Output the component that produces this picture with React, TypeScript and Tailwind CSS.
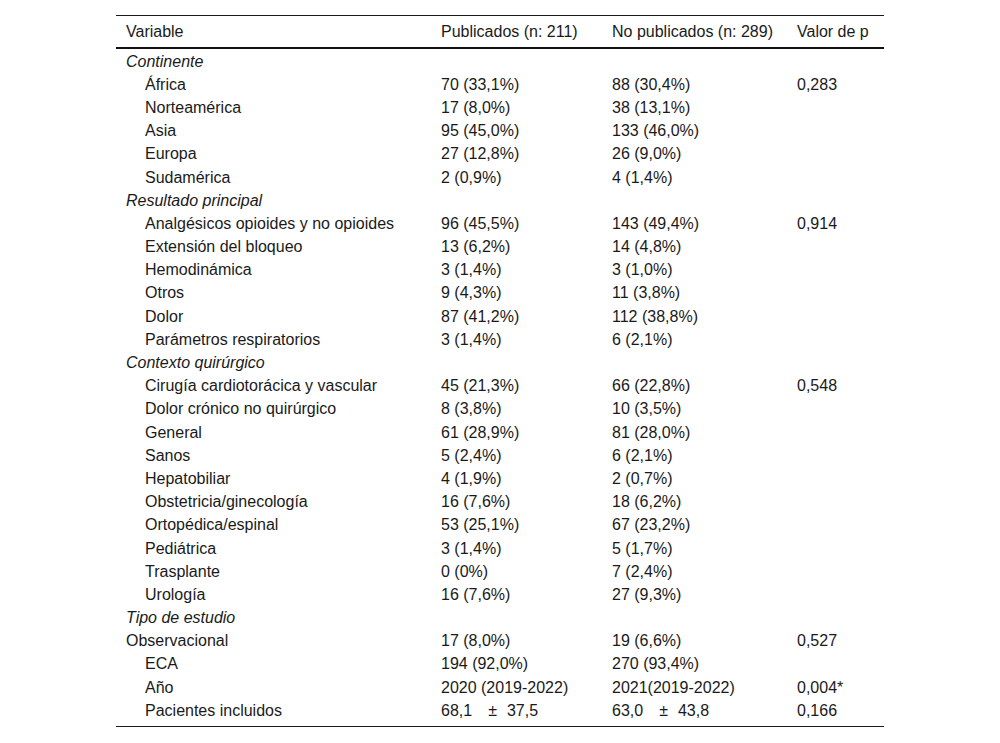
import React from "react";

type Row =
  | { kind: "section"; label: string }
  | { kind: "row"; label: string; a: React.ReactNode; b: React.ReactNode; p?: string; indent?: boolean };

const PM = ({ x, y }: { x: string; y: string }) => (
  <span className="inline-flex">
    <span>{x}</span>
    <span className="ml-[16px]">±</span>
    <span className="ml-[10px]">{y}</span>
  </span>
);

const rows: Row[] = [
  { kind: "section", label: "Continente" },
  { kind: "row", label: "África", a: "70 (33,1%)", b: "88 (30,4%)", p: "0,283", indent: true },
  { kind: "row", label: "Norteamérica", a: "17 (8,0%)", b: "38 (13,1%)", indent: true },
  { kind: "row", label: "Asia", a: "95 (45,0%)", b: "133 (46,0%)", indent: true },
  { kind: "row", label: "Europa", a: "27 (12,8%)", b: "26 (9,0%)", indent: true },
  { kind: "row", label: "Sudamérica", a: "2 (0,9%)", b: "4 (1,4%)", indent: true },
  { kind: "section", label: "Resultado principal" },
  { kind: "row", label: "Analgésicos opioides y no opioides", a: "96 (45,5%)", b: "143 (49,4%)", p: "0,914", indent: true },
  { kind: "row", label: "Extensión del bloqueo", a: "13 (6,2%)", b: "14 (4,8%)", indent: true },
  { kind: "row", label: "Hemodinámica", a: "3 (1,4%)", b: "3 (1,0%)", indent: true },
  { kind: "row", label: "Otros", a: "9 (4,3%)", b: "11 (3,8%)", indent: true },
  { kind: "row", label: "Dolor", a: "87 (41,2%)", b: "112 (38,8%)", indent: true },
  { kind: "row", label: "Parámetros respiratorios", a: "3 (1,4%)", b: "6 (2,1%)", indent: true },
  { kind: "section", label: "Contexto quirúrgico" },
  { kind: "row", label: "Cirugía cardiotorácica y vascular", a: "45 (21,3%)", b: "66 (22,8%)", p: "0,548", indent: true },
  { kind: "row", label: "Dolor crónico no quirúrgico", a: "8 (3,8%)", b: "10 (3,5%)", indent: true },
  { kind: "row", label: "General", a: "61 (28,9%)", b: "81 (28,0%)", indent: true },
  { kind: "row", label: "Sanos", a: "5 (2,4%)", b: "6 (2,1%)", indent: true },
  { kind: "row", label: "Hepatobiliar", a: "4 (1,9%)", b: "2 (0,7%)", indent: true },
  { kind: "row", label: "Obstetricia/ginecología", a: "16 (7,6%)", b: "18 (6,2%)", indent: true },
  { kind: "row", label: "Ortopédica/espinal", a: "53 (25,1%)", b: "67 (23,2%)", indent: true },
  { kind: "row", label: "Pediátrica", a: "3 (1,4%)", b: "5 (1,7%)", indent: true },
  { kind: "row", label: "Trasplante", a: "0 (0%)", b: "7 (2,4%)", indent: true },
  { kind: "row", label: "Urología", a: "16 (7,6%)", b: "27 (9,3%)", indent: true },
  { kind: "section", label: "Tipo de estudio" },
  { kind: "row", label: "Observacional", a: "17 (8,0%)", b: "19 (6,6%)", p: "0,527" },
  { kind: "row", label: "ECA", a: "194 (92,0%)", b: "270 (93,4%)", indent: true },
  { kind: "row", label: "Año", a: "2020 (2019-2022)", b: "2021(2019-2022)", p: "0,004*", indent: true },
  { kind: "row", label: "Pacientes incluidos", a: <PM x="68,1" y="37,5" />, b: <PM x="63,0" y="43,8" />, p: "0,166", indent: true },
];

export default function App() {
  return (
    <div
      className="min-h-[743px] w-full bg-white text-[#1a1a1a] text-[16px]"
      style={{ fontFamily: '"Liberation Sans", Arial, sans-serif' }}
    >
      <div className="mx-auto w-[768px] pt-[15px]">
        <div className="border-t border-[#1a1a1a] border-b-[2px] border-b-[#111] grid grid-cols-[315px_171px_185px_97px] h-[34px] items-center leading-none">
          <div className="pl-[10px]">Variable</div>
          <div className="pl-[10px]">Publicados (n: 211)</div>
          <div className="pl-[10px]">No publicados (n: 289)</div>
          <div className="pl-[10px]">Valor de p</div>
        </div>
        <div className="border-b border-[#1a1a1a] pt-[1px] pb-[4px]">
          {rows.map((r, i) =>
            r.kind === "section" ? (
              <div key={i} className="h-[23.2px] flex items-center pl-[10px] italic leading-none">
                {r.label}
              </div>
            ) : (
              <div key={i} className="grid grid-cols-[315px_171px_185px_97px] h-[23.2px] items-center leading-none">
                <div className={r.indent ? "pl-[29px]" : "pl-[10px]"}>{r.label}</div>
                <div className="pl-[10px]">{r.a}</div>
                <div className="pl-[10px]">{r.b}</div>
                <div className="pl-[10px]">{r.p ?? ""}</div>
              </div>
            )
          )}
        </div>
      </div>
    </div>
  );
}
